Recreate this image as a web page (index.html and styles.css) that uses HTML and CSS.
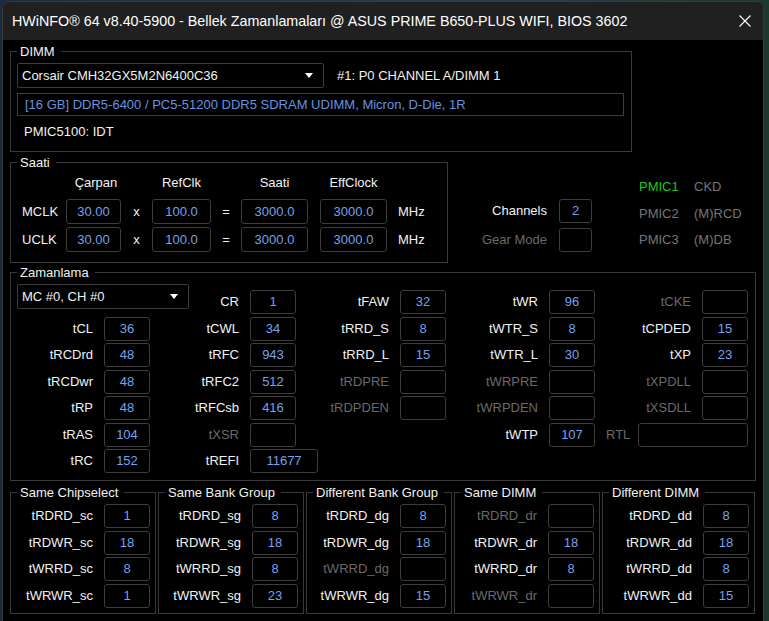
FILE: index.html
```html
<!DOCTYPE html>
<html lang="tr">

<head>
    <meta charset="UTF-8">
    <title>HWiNFO 64 - Bellek Zamanlamaları</title>
    <link rel="stylesheet" href="styles.css">
</head>

<body>
    <div class="window">
        <div class="titlebar">
            <span class="title">HWiNFO® 64 v8.40-5900 - Bellek Zamanlamaları @ ASUS PRIME B650-PLUS WIFI, BIOS 3602</span>
            <span class="close">
                <svg width="12" height="12" viewBox="0 0 12 12">
                    <path d="M0.5 0.5 L11.5 11.5 M11.5 0.5 L0.5 11.5" stroke="#fff" stroke-width="1.1" fill="none" />
                </svg>
            </span>
        </div>

        <div class="client">
            <fieldset class="group dimm">
                <legend>DIMM</legend>
                <div class="dimm-row">
                    <div class="combo module">Corsair CMH32GX5M2N6400C36</div>
                    <span>#1: P0 CHANNEL A/DIMM 1</span>
                </div>
                <div class="field">[16 GB] DDR5-6400 / PC5-51200 DDR5 SDRAM UDIMM, Micron, D-Die, 1R</div>
                <div class="pmic-id">PMIC5100: IDT</div>
            </fieldset>

            <div class="mid">
                <fieldset class="group saati">
                    <legend>Saati</legend>
                    <div class="clock">
                        <span></span>
                        <span class="head carpan">Çarpan</span>
                        <span></span>
                        <span class="head">RefClk</span>
                        <span></span>
                        <span class="head">Saati</span>
                        <span></span>
                        <span class="head">EffClock</span>
                        <span></span>
                        <span></span>

                        <span class="rowlbl">MCLK</span>
                        <div class="val">30.00</div>
                        <span class="op">x</span>
                        <div class="val">100.0</div>
                        <span class="op">=</span>
                        <div class="val">3000.0</div>
                        <span></span>
                        <div class="val">3000.0</div>
                        <span></span>
                        <span class="rowlbl">MHz</span>

                        <span class="rowlbl">UCLK</span>
                        <div class="val">30.00</div>
                        <span class="op">x</span>
                        <div class="val">100.0</div>
                        <span class="op">=</span>
                        <div class="val">3000.0</div>
                        <span></span>
                        <div class="val">3000.0</div>
                        <span></span>
                        <span class="rowlbl">MHz</span>
                    </div>
                </fieldset>

                <div class="chan">
                    <span class="lbl">Channels</span>
                    <div class="val">2</div>
                    <span class="lbl dim">Gear Mode</span>
                    <div class="val"></div>
                </div>

                <div class="pmic">
                    <span class="on">PMIC1</span><span class="off">CKD</span>
                    <span class="off">PMIC2</span><span class="off">(M)RCD</span>
                    <span class="off">PMIC3</span><span class="off">(M)DB</span>
                </div>
            </div>

            <fieldset class="group timing">
                <legend>Zamanlama</legend>
                <div class="tgrid">
                    <div class="combo mc">MC #0, CH #0</div>
                    <span class="lbl">CR</span><div class="val">1</div>
                    <span class="lbl">tFAW</span><div class="val">32</div>
                    <span class="lbl">tWR</span><div class="val">96</div>
                    <span class="lbl dim">tCKE</span><div class="val"></div>

                    <span class="lbl">tCL</span><div class="val">36</div>
                    <span class="lbl">tCWL</span><div class="val">34</div>
                    <span class="lbl">tRRD_S</span><div class="val">8</div>
                    <span class="lbl">tWTR_S</span><div class="val">8</div>
                    <span class="lbl">tCPDED</span><div class="val">15</div>

                    <span class="lbl">tRCDrd</span><div class="val">48</div>
                    <span class="lbl">tRFC</span><div class="val">943</div>
                    <span class="lbl">tRRD_L</span><div class="val">15</div>
                    <span class="lbl">tWTR_L</span><div class="val">30</div>
                    <span class="lbl">tXP</span><div class="val">23</div>

                    <span class="lbl">tRCDwr</span><div class="val">48</div>
                    <span class="lbl">tRFC2</span><div class="val">512</div>
                    <span class="lbl dim">tRDPRE</span><div class="val"></div>
                    <span class="lbl dim">tWRPRE</span><div class="val"></div>
                    <span class="lbl dim">tXPDLL</span><div class="val"></div>

                    <span class="lbl">tRP</span><div class="val">48</div>
                    <span class="lbl">tRFCsb</span><div class="val">416</div>
                    <span class="lbl dim">tRDPDEN</span><div class="val"></div>
                    <span class="lbl dim">tWRPDEN</span><div class="val"></div>
                    <span class="lbl dim">tXSDLL</span><div class="val"></div>

                    <span class="lbl">tRAS</span><div class="val">104</div>
                    <span class="lbl dim">tXSR</span><div class="val"></div>
                    <span class="lbl col7">tWTP</span><div class="val">107</div>
                    <div class="rtl">
                        <span class="dim">RTL</span>
                        <div class="val"></div>
                    </div>

                    <span class="lbl">tRC</span><div class="val">152</div>
                    <span class="lbl">tREFI</span><div class="val wide">11677</div>
                </div>
            </fieldset>

            <div class="sub">
                <fieldset class="group sg">
                    <legend>Same Chipselect</legend>
                    <div class="sgrid">
                        <span class="lbl">tRDRD_sc</span><div class="val">1</div>
                        <span class="lbl">tRDWR_sc</span><div class="val">18</div>
                        <span class="lbl">tWRRD_sc</span><div class="val">8</div>
                        <span class="lbl">tWRWR_sc</span><div class="val">1</div>
                    </div>
                </fieldset>
                <fieldset class="group sg">
                    <legend>Same Bank Group</legend>
                    <div class="sgrid">
                        <span class="lbl">tRDRD_sg</span><div class="val">8</div>
                        <span class="lbl">tRDWR_sg</span><div class="val">18</div>
                        <span class="lbl">tWRRD_sg</span><div class="val">8</div>
                        <span class="lbl">tWRWR_sg</span><div class="val">23</div>
                    </div>
                </fieldset>
                <fieldset class="group sg">
                    <legend>Different Bank Group</legend>
                    <div class="sgrid">
                        <span class="lbl">tRDRD_dg</span><div class="val">8</div>
                        <span class="lbl">tRDWR_dg</span><div class="val">18</div>
                        <span class="lbl dim">tWRRD_dg</span><div class="val"></div>
                        <span class="lbl">tWRWR_dg</span><div class="val">15</div>
                    </div>
                </fieldset>
                <fieldset class="group sg">
                    <legend>Same DIMM</legend>
                    <div class="sgrid">
                        <span class="lbl dim">tRDRD_dr</span><div class="val"></div>
                        <span class="lbl">tRDWR_dr</span><div class="val">18</div>
                        <span class="lbl">tWRRD_dr</span><div class="val">8</div>
                        <span class="lbl dim">tWRWR_dr</span><div class="val"></div>
                    </div>
                </fieldset>
                <fieldset class="group sg last">
                    <legend>Different DIMM</legend>
                    <div class="sgrid">
                        <span class="lbl">tRDRD_dd</span><div class="val">8</div>
                        <span class="lbl">tRDWR_dd</span><div class="val">18</div>
                        <span class="lbl">tWRRD_dd</span><div class="val">8</div>
                        <span class="lbl">tWRWR_dd</span><div class="val">15</div>
                    </div>
                </fieldset>
            </div>
        </div>
    </div>
</body>

</html>
```

FILE: styles.css
```css
body {
    margin: 0;
    height: 621px;
    overflow: hidden;
    background: linear-gradient(90deg, #1b2a40, #2a3a55 60%, #1c3a2c);
    font-family: "Liberation Sans", Arial, sans-serif;
    font-size: 13px;
    color: #f2f2f2;
}

.window {
    margin: 1px 0 0 2px;
    width: 760px;
    height: 640px;
    background: #000;
    border: 1px solid #3a3a3a;
    border-radius: 8px 8px 0 0;
    overflow: hidden;
}

.titlebar {
    height: 38px;
    background: #202020;
    display: flex;
    align-items: center;
    padding-left: 9px;
    font-size: 14.3px;
    color: #fff;
}

.close {
    margin-left: auto;
    width: 36px;
    display: flex;
    justify-content: center;
}

.client {
    padding: 4px 0 0 7px;
}

/* group boxes */
.group {
    margin: 0;
    border: 1px solid #3a3a3a;
    padding: 4px 6px 11px 6px;
    min-width: 0;
    box-sizing: border-box;
}

.group legend {
    padding: 0 6px 0 3px;
    line-height: 15px;
}

.val {
    box-sizing: border-box;
    border: 1px solid #3d3d3d;
    border-radius: 3px;
    height: 24px;
    line-height: 22px;
    text-align: center;
    color: #74a2ee;
}

.lbl {
    text-align: right;
    padding-right: 11px;
    line-height: 24px;
    white-space: nowrap;
}

.dim {
    color: #6a6a6a;
}

.combo {
    box-sizing: border-box;
    height: 25px;
    border: 1px solid #3d3d3d;
    border-radius: 2px;
    padding: 0 10px 0 4px;
    display: flex;
    align-items: center;
    justify-content: space-between;
}

.combo::after {
    content: "";
    border-left: 4px solid transparent;
    border-right: 4px solid transparent;
    border-top: 5px solid #fff;
}

/* DIMM */
.dimm {
    width: 622px;
}

.dimm-row {
    display: flex;
    align-items: center;
    gap: 13px;
}

.module {
    width: 307px;
}

.field {
    box-sizing: border-box;
    margin-top: 5px;
    width: 607px;
    height: 23px;
    line-height: 21px;
    border: 1px solid #3d3d3d;
    padding-left: 7px;
    color: #6593e0;
}

.pmic-id {
    margin-top: 7px;
    padding-left: 7px;
    line-height: 17px;
}

/* Saati + channels */
.mid {
    display: flex;
    align-items: flex-start;
    margin-top: 3px;
}

.saati {
    width: 438px;
    padding: 5px 6px 10px 6px;
}

.clock {
    display: grid;
    grid-template-columns: 44px 55px 31px 59px 30px 67px 12px 67px 11px auto;
    grid-template-rows: 21px 25px 25px;
    row-gap: 3px;
    margin-left: 5px;
}

.clock .head {
    text-align: center;
    line-height: 16px;
}

.clock .carpan {
    padding-left: 5px;
}

.clock .val {
    height: 25px;
    line-height: 23px;
}

.rowlbl {
    line-height: 25px;
}

.op {
    text-align: center;
    line-height: 25px;
}

.chan {
    display: grid;
    grid-template-columns: 87px 33px;
    column-gap: 12px;
    row-gap: 5px;
    margin: 44px 0 0 12px;
}

.chan .lbl {
    padding-right: 0;
}

.pmic {
    display: grid;
    grid-template-columns: 55px auto;
    grid-auto-rows: 26.5px;
    line-height: 26.5px;
    margin: 19px 0 0 47px;
}

.pmic .on {
    color: #1ec81e;
}

.pmic .off {
    color: #767676;
}

/* Zamanlama */
.timing {
    width: 746px;
    margin-top: 2px;
    padding: 10px 6px 7px 6px;
}

.tgrid {
    display: grid;
    grid-template-columns: 87px 46px 100px 46px 104px 46px 103px 46px 107px 46px;
    grid-auto-rows: 24px;
    row-gap: 2.55px;
}

.mc {
    grid-column: span 2;
    width: 172px;
    margin-top: -6px;
}

.col7 {
    grid-column: 7;
}

.val.wide {
    width: 68px;
}

.rtl {
    grid-column: span 2;
    display: flex;
    gap: 8px;
    padding-left: 11px;
    line-height: 24px;
}

.rtl .val {
    flex: 1;
}

/* alt gruplar */
.sub {
    display: flex;
    gap: 2px;
    margin-top: 4px;
}

.sg {
    width: 146px;
    padding: 4px 5px 5px 6px;
}

.sg.last {
    width: 153px;
}

.sgrid {
    display: grid;
    grid-template-columns: 1fr 46px;
    grid-auto-rows: 24px;
    row-gap: 2.55px;
}
```
